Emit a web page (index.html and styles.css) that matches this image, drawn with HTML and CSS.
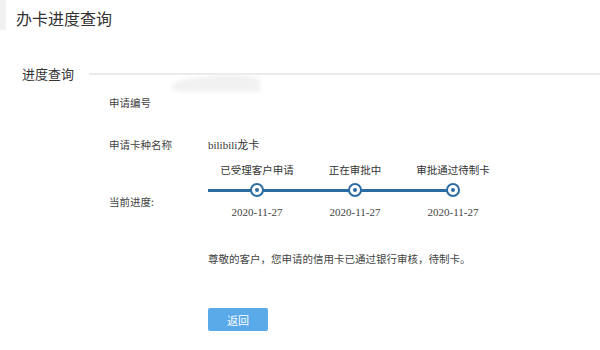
FILE: index.html
```html
<!DOCTYPE html>
<html lang="zh-CN">
<head>
  <meta charset="UTF-8">
  <meta name="viewport" content="width=device-width, initial-scale=1.0">
  <title>办卡进度查询</title>
  <link rel="stylesheet" href="styles.css">
</head>
<body>
  <h1 class="page-title">办卡进度查询</h1>

  <div class="section-head">
    <span class="section-name">进度查询</span>
    <span class="section-rule"></span>
    <span class="smudge"></span>
  </div>

  <div class="form">
    <div class="row">
      <div class="label">申请编号</div>
      <div class="value"></div>
    </div>

    <div class="row row-card">
      <div class="label">申请卡种名称</div>
      <div class="value latin">bilibili龙卡</div>
    </div>

    <div class="row row-progress">
      <div class="label label-progress">当前进度:</div>
      <div class="steps">
        <div class="step">
          <div class="step-name">已受理客户申请</div>
          <div class="step-mark"><span class="dot"></span></div>
          <div class="step-date">2020-11-27</div>
        </div>
        <div class="step">
          <div class="step-name">正在审批中</div>
          <div class="step-mark"><span class="dot"></span></div>
          <div class="step-date">2020-11-27</div>
        </div>
        <div class="step last">
          <div class="step-name">审批通过待制卡</div>
          <div class="step-mark"><span class="dot"></span></div>
          <div class="step-date">2020-11-27</div>
        </div>
      </div>
    </div>

    <p class="message">尊敬的客户，您申请的信用卡已通过银行审核，待制卡。</p>

    <button class="back-btn">返回</button>
  </div>
</body>
</html>
```

FILE: styles.css
```css
body {
  margin: 0;
  padding: 0;
  background: #fff;
  font-family: "Noto Sans CJK SC", "Noto Sans", sans-serif;
  color: #444;
}

.page-title {
  margin: 0;
  height: 30px;
  padding-left: 10px;
  border-left: 6px solid #f1f1f1;
  font-size: 16px;
  font-weight: normal;
  line-height: 36px;
  color: #333;
}

.section-head {
  position: relative;
  display: flex;
  align-items: center;
  margin-top: 36px;
  height: 16px;
}

.section-name {
  padding-left: 22px;
  font-size: 13px;
  line-height: 16px;
  color: #333;
}

.section-rule {
  flex: 1;
  height: 2px;
  margin-left: 15px;
  background: #ebebeb;
}

.smudge {
  position: absolute;
  left: 172px;
  top: 9px;
  width: 88px;
  height: 17px;
  border-radius: 70% 30% 10% 20%;
  background: #f1f1f1;
  filter: blur(2px);
}

.form {
  padding-left: 109px;
  font-size: 10.5px;
}

.row {
  display: grid;
  grid-template-columns: 99px 1fr;
  line-height: 16px;
  margin-top: 13px;
}

.row-card {
  margin-top: 26px;
}

.row-progress {
  margin-top: 9px;
}

.label {
  color: #444;
}

.label-progress {
  padding-top: 32px;
}

.latin {
  font-family: "Liberation Serif", "Noto Sans CJK SC", serif;
  font-size: 11px;
  color: #333;
}

.steps {
  display: grid;
  grid-template-columns: repeat(3, 98px);
}

.step {
  display: flex;
  flex-direction: column;
  align-items: center;
}

.step-name {
  font-size: 10.5px;
  color: #333;
  white-space: nowrap;
}

.step-mark {
  position: relative;
  display: flex;
  justify-content: center;
  align-items: center;
  width: 100%;
  height: 14px;
  margin-top: 5px;
}

.step-mark::before,
.step-mark::after {
  content: "";
  position: absolute;
  top: 6px;
  height: 3px;
  width: 50%;
  background: #2b6ca3;
}

.step-mark::before {
  left: 0;
}

.step-mark::after {
  right: 0;
}

.last .step-mark::after {
  display: none;
}

.dot {
  position: relative;
  z-index: 1;
  box-sizing: border-box;
  width: 14px;
  height: 14px;
  border: 2px solid #2b6ca3;
  border-radius: 50%;
  background: #fff;
  display: flex;
  justify-content: center;
  align-items: center;
}

.dot::after {
  content: "";
  width: 4px;
  height: 4px;
  border-radius: 50%;
  background: #2b6ca3;
}

.step-date {
  margin-top: 7px;
  font-family: "Liberation Serif", serif;
  font-size: 11px;
  color: #444;
}

.message {
  margin: 31px 0 0 99px;
  line-height: 16px;
  color: #444;
}

.back-btn {
  display: block;
  margin: 41px 0 0 99px;
  width: 60px;
  height: 23px;
  padding: 0;
  border: none;
  border-radius: 2px;
  background: #5aa9e8;
  color: #fff;
  font-family: "Noto Sans CJK SC", sans-serif;
  font-size: 11px;
  cursor: pointer;
}
```
